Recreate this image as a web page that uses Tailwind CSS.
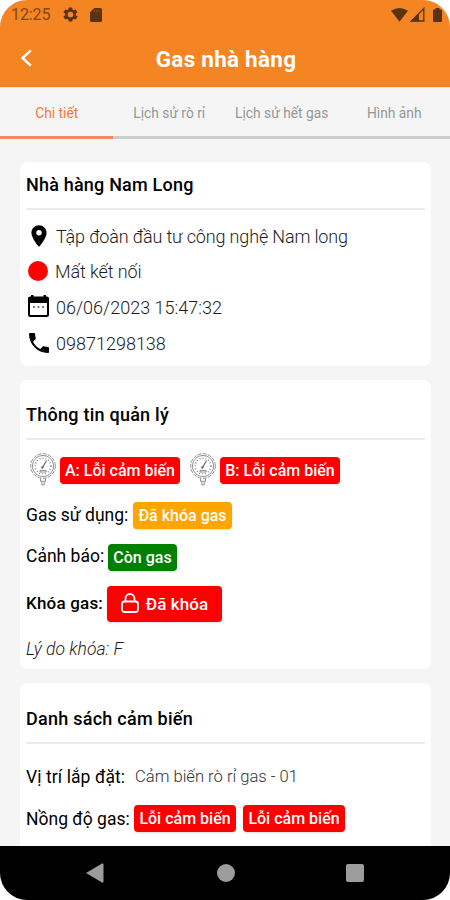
<!DOCTYPE html>
<html lang="vi">
<head>
<meta charset="utf-8">
<title>Gas nhà hàng</title>
<script src="https://cdn.jsdelivr.net/npm/@tailwindcss/browser@4"></script>
</head>
<body class="bg-white">
<svg class="hidden">
  <symbol id="gauge" viewBox="0 0 28 34">
    <g fill="none" stroke="#777" stroke-width="0.8">
      <circle cx="14" cy="14" r="12.3" stroke-dasharray="4 1.2"/>
      <circle cx="14" cy="14" r="10.6"/>
      <circle cx="14" cy="14" r="7.8" stroke-dasharray="0.8 2.2" stroke-width="1.6"/>
      <path d="M13 16.5 17.5 8.5" stroke-width="1.3"/>
      <circle cx="13.3" cy="15.3" r="1"/>
      <path d="M11 20h6v-1.6h-6zM11.5 26.3v3h5v-3M12.8 29.5v3.5h2.4v-3.5"/>
    </g>
  </symbol>
</svg>
<div class="w-[450px] h-[900px] flex flex-col overflow-hidden rounded-[27px] bg-[#f5f5f5] font-[Roboto,sans-serif] text-black whitespace-nowrap">
  <header class="h-[87px] shrink-0 bg-[#f58423] flex flex-col">
    <div class="h-[29px] flex items-center pl-[11px] pr-[8px] text-[#5c3310]">
      <span class="text-[16px] leading-[29px] w-[52px] tracking-[-0.1px] text-[#85470f]">12:25</span>
      <svg class="w-[17px] h-[17px] -ml-px" viewBox="0 0 24 24" fill="currentColor"><path fill-rule="evenodd" d="M19.4 13c.1-.6.1-1.400 0-2l2.100-1.700c.2-.1.2-.4.1-.6l-2-3.500c-.1-.2-.4-.3-.6-.2l-2.500 1c-.5-.4-1.100-.7-1.700-1l-.4-2.600c0-.2-.2-.4-.5-.4h-4c-.2 0-.4.2-.5.400L9 5c-.6.2-1.200.6-1.700 1l-2.500-1c-.2-.1-.5 0-.6.2l-2 3.500c-.1.2-.1.500.1.6L4.500 11c-.1.6-.1 1.400 0 2l-2.200 1.700c-.2.1-.2.4-.1.6l2 3.500c.1.2.4.3.6.2l2.500-1c.5.4 1.100.7 1.700 1l.4 2.600c0 .2.2.4.500.4h4c.2 0 .4-.2.500-.4L15 19c.6-.2 1.200-.6 1.700-1l2.500 1c.2.1.5 0 .6-.2l2-3.500c.1-.2.1-.500-.1-.6zM12 16a4 4 0 1 1 0-8 4 4 0 0 1 0 8z"/></svg>
      <svg class="w-[12px] h-[14px] ml-[11px]" viewBox="0 0 12 14" fill="currentColor"><path d="M4.300 0H10.500Q12 0 12 1.500V12.500Q12 14 10.500 14H1.500Q0 14 0 12.500V4.300z"/><path d="M4.500 1.800v2.200M6.700 1.800v2.200M8.900 1.800v2.200" stroke="#985318" stroke-width=".8"/></svg>
      <svg class="w-[17px] h-[14px] ml-auto" viewBox="0 0 17 14" fill="currentColor"><path d="M0 2.800Q8.500-2.800 17 2.800L8.500 13.700z"/></svg>
      <svg class="w-[15px] h-[15px] ml-[2px]" viewBox="0 0 15 15"><path fill="currentColor" d="M9 6v8.500H.5z"/><path d="M1.500 14 13.800 1.500V14z" fill="none" stroke="currentColor" stroke-width="1.300"/></svg>
      <svg class="w-[9px] h-[14px] ml-[8px]" viewBox="0 0 9 14" fill="currentColor"><path d="M2.500 0h4v1.500H8q1 0 1 1V13q0 1-1 1H1q-1 0-1-1V2.500q0-1 1-1h1.500z"/></svg>
    </div>
    <div class="h-[58px] grid grid-cols-[56px_1fr_56px] items-center">
      <svg class="w-[12px] h-[18px] ml-[20px]" viewBox="0 0 12 18" fill="none" stroke="#fff" stroke-width="2.500"><path d="M10.800 1.300 2.500 9l8.300 7.700"/></svg>
      <h1 class="text-[22.500px] font-bold text-white text-center pt-[3px] pl-[2px] tracking-[0.25px]">Gas nhà hàng</h1>
    </div>
  </header>
  <nav class="h-[52px] shrink-0 grid grid-cols-4 text-center text-[13.800px] leading-[50px] text-[#959595] border-t border-[#f9e8d9]">
    <span class="h-[51px] pl-px border-b-3 border-[#f18a63] text-[#f37943]">Chi tiết</span>
    <span class="h-[51px] pl-px border-b-3 border-[#cdcdcd]">Lịch sử rò rỉ</span>
    <span class="h-[51px] pl-px border-b-3 border-[#cdcdcd]">Lịch sử hết gas</span>
    <span class="h-[51px] pl-px border-b-3 border-[#cdcdcd]">Hình ảnh</span>
  </nav>
  <main class="flex-1 min-h-0 overflow-hidden pt-[23px] pl-[20px] pr-[19px] flex flex-col gap-[14px]">
    <section class="h-[204px] shrink-0 rounded-[8px] bg-white px-[6px]">
      <h2 class="h-[48px] leading-[46px] text-[18px] font-medium tracking-[0.2px] border-b-2 border-[#ebebeb]">Nhà hàng Nam Long</h2>
      <div class="pt-[8px] text-[18px] font-light text-[#1c1c1c]">
        <div class="h-[36px] flex items-center"><svg class="w-[26px] h-[26px] mr-[4px] -mt-px" viewBox="0 0 24 24" fill="#000"><path fill-rule="evenodd" d="M12 2C8.130 2 5 5.130 5 9c0 5.250 7 13 7 13s7-7.750 7-13c0-3.870-3.130-7-7-7zm0 9.500a2.500 2.500 0 1 1 0-5 2.500 2.500 0 0 1 0 5z"/></svg><span class="tracking-[-0.15px]">Tập đoàn đầu tư công nghệ Nam long</span></div>
        <div class="h-[35px] flex items-center"><i class="size-[20px] ml-[2px] mr-[7px] -mt-[2px] rounded-full bg-[#f00]"></i><span class="tracking-[-0.1px]">Mất kết nối</span></div>
        <div class="h-[36px] flex items-center"><svg class="w-[21px] h-[22px] ml-[2px] mr-[7px] -mt-[2px]" viewBox="0 0 21 22"><path fill="#000" fill-rule="evenodd" d="M3 0h2.500v1.500h10V0H18v1.500h1q2 0 2 2V20q0 2-2 2H2q-2 0-2-2V3.500q0-2 2-2h1zM2 8V20h17V8z"/><path d="M5 12h1.800m2.800 0h1.800m2.800 0h1.800" stroke="#444" stroke-width="1.600"/></svg><span>06/06/2023 15:47:32</span></div>
        <div class="h-[36px] flex items-center"><svg class="w-[20px] h-[20px] ml-[3px] mr-[7px] -mt-px" viewBox="3 3 18 18"><path d="M6.620 10.790c1.440 2.830 3.760 5.140 6.590 6.590l2.200-2.200c.27-.27.67-.36 1.020-.24 1.120.37 2.330.57 3.570.57.550 0 1 .45 1 1V20c0 .55-.45 1-1 1-9.390 0-17-7.610-17-17 0-.55.45-1 1-1h3.500c.55 0 1 .45 1 1 0 1.250.2 2.450.57 3.570.11.350.03.74-.25 1.020z"/></svg><span>09871298138</span></div>
      </div>
    </section>
    <section class="h-[289px] shrink-0 rounded-[8px] bg-white px-[6px]">
      <h2 class="h-[60px] leading-[69px] text-[18px] font-medium tracking-[0.25px] border-b-2 border-[#ebebeb]">Thông tin quản lý</h2>
      <div class="pt-[10px] text-[17.500px]">
        <div class="h-[40px] flex items-center">
          <svg class="w-[28px] h-[34px] ml-[3px] mr-[3px] -mt-[2px]"><use href="#gauge"/></svg>
          <span class="w-[120px] h-[27px] leading-[28px] rounded-[4px] bg-[#f00] text-white text-[16px] font-medium text-center shadow-sm">A: Lỗi cảm biến</span>
          <svg class="w-[28px] h-[34px] ml-[9px] mr-[3px] -mt-[2px]"><use href="#gauge"/></svg>
          <span class="w-[120px] h-[27px] leading-[28px] rounded-[4px] bg-[#f00] text-white text-[16px] font-medium text-center shadow-sm">B: Lỗi cảm biến</span>
        </div>
        <div class="h-[47px] flex items-center pt-[4px]"><span class="w-[107px]">Gas sử dụng:</span><span class="w-[99px] h-[27px] leading-[28px] rounded-[4px] bg-[#ffa500] text-white text-[16px] font-medium text-center shadow-sm">Đã khóa gas</span></div>
        <div class="h-[41px] flex items-center"><span class="w-[82px] -mt-[2px]">Cảnh báo:</span><span class="w-[69px] h-[27px] leading-[28px] -mt-px rounded-[4px] bg-[#008000] text-white text-[16px] font-medium text-center shadow-sm">Còn gas</span></div>
        <div class="h-[52px] flex items-center"><span class="w-[81px] text-[17px] font-medium tracking-[0.2px]">Khóa gas:</span><span class="w-[115px] h-[36px] rounded-[4px] bg-[#f00] text-white text-[17px] font-medium flex items-center justify-center gap-[7px] shadow-sm"><svg class="w-[18px] h-[20px] -mt-[3px]" viewBox="0 0 18 20" fill="none" stroke="#fff" stroke-width="1.800"><rect x="1" y="8.500" width="16" height="10.500" rx="2.500"/><path d="M4.500 8.500V5.500a4.500 4.500 0 0 1 9 0v3"/></svg><span class="pt-px tracking-[0.1px]">Đã khóa</span></span></div>
        <p class="h-[38px] leading-[39px] font-light italic text-[#1c1c1c]">Lý do khóa: F</p>
      </div>
    </section>
    <section class="h-[280px] shrink-0 rounded-[8px] bg-white px-[6px]">
      <h2 class="h-[61px] leading-[71px] text-[18px] font-medium tracking-[0.25px] border-b-2 border-[#ebebeb]">Danh sách cảm biến</h2>
      <div class="pt-[12px] text-[17.500px]">
        <div class="h-[42px] flex items-center"><span class="w-[109px] tracking-[0.08px]">Vị trí lắp đặt:</span><span class="text-[16.600px] font-light text-[#333]">Cảm biến rò rỉ gas - 01</span></div>
        <div class="h-[42px] flex items-center"><span class="w-[108px]">Nồng độ gas:</span><span class="w-[102px] h-[27px] leading-[28px] -mt-[2px] rounded-[4px] bg-[#f00] text-white text-[16px] font-medium text-center shadow-sm">Lỗi cảm biến</span><span class="w-[102px] h-[27px] leading-[28px] -mt-[2px] ml-[7px] rounded-[4px] bg-[#f00] text-white text-[16px] font-medium text-center shadow-sm">Lỗi cảm biến</span></div>
      </div>
    </section>
  </main>
  <footer class="h-[54px] shrink-0 bg-black flex items-center text-[#9c9c9c]">
    <svg class="w-[18px] h-[20px] ml-[86px]" viewBox="0 0 18 20" fill="currentColor"><path d="M0 10 16 .5q1.500-.5 1.500 1v17q0 1.500-1.500 1z"/></svg>
    <i class="size-[18px] rounded-full bg-[#9c9c9c] ml-[113px]"></i>
    <i class="size-[18px] rounded-[2px] bg-[#9c9c9c] ml-[111px]"></i>
  </footer>
</div>
</body>
</html>
